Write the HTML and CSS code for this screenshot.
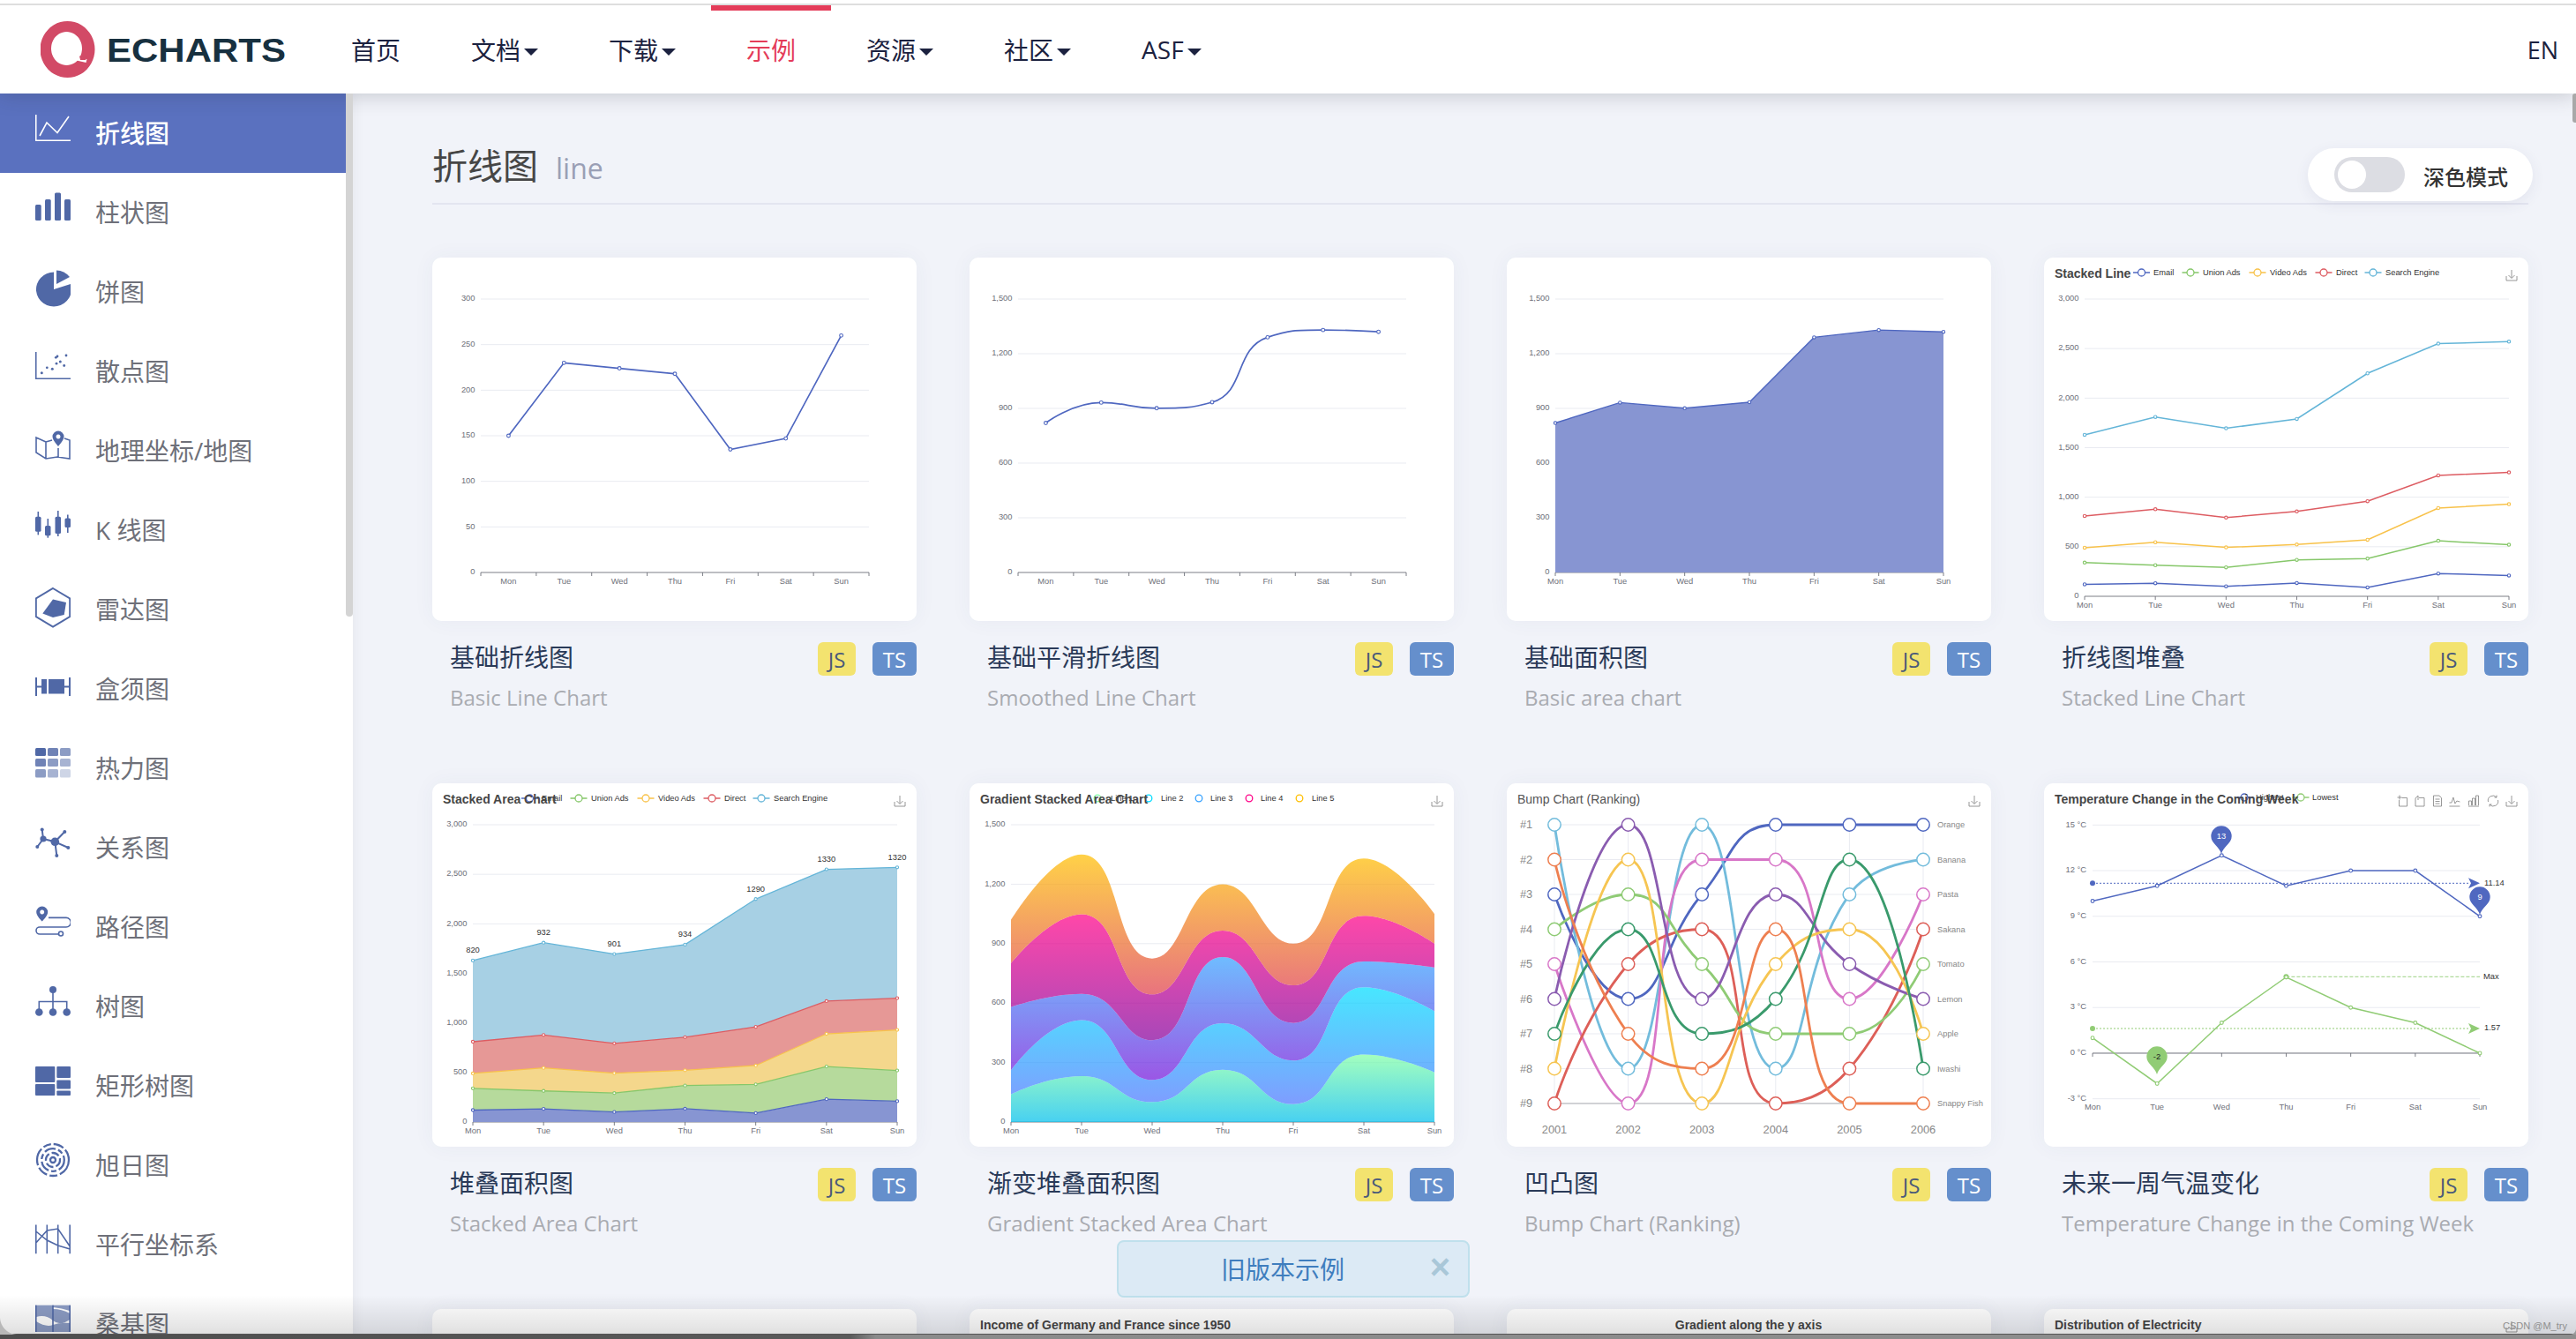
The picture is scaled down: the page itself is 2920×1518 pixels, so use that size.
FILE: index.html
```html
<!DOCTYPE html>
<html lang="zh-CN">
<head>
<meta charset="utf-8">
<title>Examples - Apache ECharts</title>
<link rel="stylesheet" href="styles.css">
</head>
<body>
<div class="app">
  <header class="topbar">
    <svg class="logo" viewBox="0 0 278 100" aria-label="ECharts">
      <path class="logo-ring" fill-rule="evenodd" d="M30.5 18a31 32 0 1 0 0.01 0ZM29.5 30a17.5 19 0 1 1-0.01 0Z"/>
      <path class="logo-gap" d="M39 60l13 3"/>
      <path class="logo-hook" d="M44 57q2 3 6 2l3-1-2 4-6 0Z"/>
      <text class="logo-text" x="75" y="64" textLength="203" lengthAdjust="spacingAndGlyphs">ECHARTS</text>
    </svg>
    <nav class="nav">
      <a class="nav-item">首页</a>
      <a class="nav-item has-caret">文档</a>
      <a class="nav-item has-caret">下载</a>
      <a class="nav-item is-active">示例</a>
      <a class="nav-item has-caret">资源</a>
      <a class="nav-item has-caret">社区</a>
      <a class="nav-item has-caret">ASF</a>
    </nav>
    <a class="lang">EN</a>
  </header>

  <div class="body">
    <aside class="sidebar">
      <a class="side-item is-active">
        <svg class="side-icon" viewBox="0 0 40 90"><path class="ic-line" d="M.75 24V53.25H40M5 48L13 33L25 44.5L38 26"/></svg>
        <span>折线图</span>
      </a>
      <a class="side-item">
        <svg class="side-icon" viewBox="0 0 40 90"><rect x="0" y="36" width="6.7" height="18" rx="1.5"/><rect x="11" y="30" width="6.7" height="24" rx="1.5"/><rect x="22" y="22.5" width="7" height="31.5" rx="1.5"/><rect x="33" y="30" width="7" height="24" rx="1.5"/></svg>
        <span>柱状图</span>
      </a>
      <a class="side-item">
        <svg class="side-icon" viewBox="0 0 40 90"><path d="M21 22.5A20 19.5 0 1 0 40 36L21 42Z"/><path d="M24 20.6Q33 21 39 28L24 36Z"/></svg>
        <span>饼图</span>
      </a>
      <a class="side-item">
        <svg class="side-icon" viewBox="0 0 40 90"><path class="ic-line" d="M.75 23V53.25H40"/><circle cx="7.3" cy="46.8" r="1.5"/><circle cx="13.3" cy="40.8" r="1.4"/><circle cx="19.3" cy="42.2" r="1.5"/><circle cx="24" cy="36.2" r="1.4"/><circle cx="23.3" cy="29.3" r="1.4"/><circle cx="28.3" cy="34" r="1.5"/><circle cx="32.7" cy="38.5" r="1.4"/><circle cx="35" cy="27" r="1.4"/><circle cx="25" cy="28" r="1.4"/></svg>
        <span>散点图</span>
      </a>
      <a class="side-item">
        <svg class="side-icon" viewBox="0 0 40 90"><path class="ic-line" d="M12 35L1 30V47L12 54L25 52L39 54V33L33 31M12 35L19 33M12 35V54M26 42V52"/><path fill-rule="evenodd" d="M26 22.5a6.5 6.5 0 0 1 6.5 6.5c0 4-6.5 11-6.5 11s-6.500-7-6.500-11a6.500 6.500 0 0 1 6.500-6.500ZM26 26.500a2.500 2.500 0 1 0 .01 0Z"/></svg>
        <span>地理坐标/地图</span>
      </a>
      <a class="side-item">
        <svg class="side-icon" viewBox="0 0 40 90"><rect x="0" y="29.800" width="6.500" height="17" rx="1.500"/><rect x="2.500" y="24" width="1.600" height="26.400"/><rect x="11" y="40" width="6.500" height="11.300" rx="1.500"/><rect x="13.500" y="32" width="1.600" height="21.700"/><rect x="22.500" y="29.800" width="6.500" height="19.200" rx="1.500"/><rect x="25" y="23" width="1.600" height="29"/><rect x="33.500" y="31.600" width="6.500" height="10.400" rx="1.500"/><rect x="36" y="27.500" width="1.600" height="20.500"/></svg>
        <span>K 线图</span>
      </a>
      <a class="side-item">
        <svg class="side-icon" viewBox="0 0 40 90"><path class="ic-line ic-thick" d="M20 21L39.200 32.500V53L20 64.700L.8 53V32.500Z"/><path d="M20 33.400L35 37L32.700 51L20 54L8.300 49.500Z"/></svg>
        <span>雷达图</span>
      </a>
      <a class="side-item">
        <svg class="side-icon" viewBox="0 0 40 90"><path class="ic-line ic-thick" d="M1 32V53M1 42.500H8M39 32V53M33 42.500H39"/><rect x="7" y="34" width="6" height="16.500"/><rect x="15" y="34" width="18" height="16.500"/></svg>
        <span>盒须图</span>
      </a>
      <a class="side-item">
        <svg class="side-icon" viewBox="0 0 40 90">
          <rect x="0" y="22" width="12" height="9" rx="1.500"/><rect class="o8" x="14" y="22" width="12" height="9" rx="1.500"/><rect class="o6" x="28" y="22" width="12" height="9" rx="1.500"/>
          <rect class="o8" x="0" y="34" width="12" height="9" rx="1.500"/><rect class="o6" x="14" y="34" width="12" height="9" rx="1.500"/><rect class="o5" x="28" y="34" width="12" height="9" rx="1.500"/>
          <rect class="o6" x="0" y="46" width="12" height="9.500" rx="1.500"/><rect class="o5" x="14" y="46" width="12" height="9.500" rx="1.500"/><rect class="o3" x="28" y="46" width="12" height="9.500" rx="1.500"/>
        </svg>
        <span>热力图</span>
      </a>
      <a class="side-item">
        <svg class="side-icon" viewBox="0 0 40 90"><path class="ic-line ic-thick" d="M7.700 24.600L9 35L2.300 44M9 35L22.300 38.300L33.300 27M22.300 38.300L37.300 45M22.300 38.300L24.300 54"/><circle cx="22.300" cy="38.300" r="4.800"/><circle cx="9" cy="35" r="3.600"/><circle cx="7.700" cy="24.600" r="2"/><circle cx="2.300" cy="44" r="2"/><circle cx="33.300" cy="27" r="2"/><circle cx="37.300" cy="45" r="2"/><circle cx="24.300" cy="54" r="2"/></svg>
        <span>关系图</span>
      </a>
      <a class="side-item">
        <svg class="side-icon" viewBox="0 0 40 90"><path fill-rule="evenodd" d="M7.700 21.500a6.500 6.500 0 0 1 6.500 6.500c0 4.500-6.500 10.500-6.500 10.500s-6.500-6-6.500-10.500a6.500 6.500 0 0 1 6.500-6.500ZM7.700 25.500a2.500 2.500 0 1 0 .01 0Z"/><path class="ic-line" d="M15 34.400H35A5.300 5.300 0 0 1 35 45H5A4 4 0 0 0 5 53H26.500"/><circle class="ic-line" cx="29" cy="52.500" r="2.500"/></svg>
        <span>路径图</span>
      </a>
      <a class="side-item">
        <svg class="side-icon" viewBox="0 0 40 90"><path class="ic-line" d="M20 26V50M4.300 50V39.500H35.700V50"/><circle cx="20" cy="26" r="4"/><circle cx="4.300" cy="51.500" r="4.300"/><circle cx="20" cy="51.500" r="4.300"/><circle cx="35.700" cy="51.500" r="4.300"/></svg>
        <span>树图</span>
      </a>
      <a class="side-item">
        <svg class="side-icon" viewBox="0 0 40 90"><rect x="0" y="23" width="22.300" height="18" rx="1"/><rect x="0" y="43" width="22.300" height="13" rx="1"/><rect x="24.300" y="23" width="15.700" height="13" rx="1"/><rect x="24.300" y="38.500" width="15.700" height="10" rx="1"/><rect x="24.300" y="50.500" width="15.700" height="5.500" rx="1"/></svg>
        <span>矩形树图</span>
      </a>
      <a class="side-item">
        <svg class="side-icon" viewBox="0 0 40 90"><g class="ic-rings"><circle cx="20" cy="39" r="3"/><circle cx="20" cy="39" r="8" stroke-dasharray="9 3"/><circle cx="20" cy="39" r="12.800" stroke-dasharray="13 3 6 3"/><circle cx="20" cy="39" r="18" stroke-dasharray="20 3 9 3 12 3"/></g></svg>
        <span>旭日图</span>
      </a>
      <a class="side-item">
        <svg class="side-icon" viewBox="0 0 40 90"><path class="ic-line" d="M.8 22.400V55.300M13.300 22.400V55.300M25.700 22.400V55.300M39.200 22.400V55.300M.8 43L13.300 29L25.700 27L39.200 47M.8 30L13.300 40L25.700 46L39.200 50"/></svg>
        <span>平行坐标系</span>
      </a>
      <a class="side-item">
        <svg class="side-icon" viewBox="0 0 40 90"><rect class="o6" x="0" y="23.700" width="40" height="30.300"/><path class="ic-sankey" d="M1 37Q12 34 20 41T39 40V44Q28 43 20 46T1 42ZM20 28Q30 28 39 33V30Q30 27 20 26Z"/><path class="ic-line" d="M.8 23.700V54M20 23.700V54M39.200 23.700V54"/></svg>
        <span>桑基图</span>
      </a>
    </aside>

    <main class="main">
      <h1 class="page-title">折线图<small class="page-sub">line</small></h1>
      <section class="grid">
        <article class="item">
          <div class="card" data-chart="basic"></div>
          <div class="caption"><h2 class="cap-title">基础折线图</h2><div class="badges"><span class="badge badge-js">JS</span><span class="badge badge-ts">TS</span></div><p class="cap-sub">Basic Line Chart</p></div>
        </article>
        <article class="item">
          <div class="card" data-chart="smooth"></div>
          <div class="caption"><h2 class="cap-title">基础平滑折线图</h2><div class="badges"><span class="badge badge-js">JS</span><span class="badge badge-ts">TS</span></div><p class="cap-sub">Smoothed Line Chart</p></div>
        </article>
        <article class="item">
          <div class="card" data-chart="area"></div>
          <div class="caption"><h2 class="cap-title">基础面积图</h2><div class="badges"><span class="badge badge-js">JS</span><span class="badge badge-ts">TS</span></div><p class="cap-sub">Basic area chart</p></div>
        </article>
        <article class="item">
          <div class="card" data-chart="stacked-line"></div>
          <div class="caption"><h2 class="cap-title">折线图堆叠</h2><div class="badges"><span class="badge badge-js">JS</span><span class="badge badge-ts">TS</span></div><p class="cap-sub">Stacked Line Chart</p></div>
        </article>
        <article class="item">
          <div class="card" data-chart="stacked-area"></div>
          <div class="caption"><h2 class="cap-title">堆叠面积图</h2><div class="badges"><span class="badge badge-js">JS</span><span class="badge badge-ts">TS</span></div><p class="cap-sub">Stacked Area Chart</p></div>
        </article>
        <article class="item">
          <div class="card" data-chart="gradient"></div>
          <div class="caption"><h2 class="cap-title">渐变堆叠面积图</h2><div class="badges"><span class="badge badge-js">JS</span><span class="badge badge-ts">TS</span></div><p class="cap-sub">Gradient Stacked Area Chart</p></div>
        </article>
        <article class="item">
          <div class="card" data-chart="bump"></div>
          <div class="caption"><h2 class="cap-title">凹凸图</h2><div class="badges"><span class="badge badge-js">JS</span><span class="badge badge-ts">TS</span></div><p class="cap-sub">Bump Chart (Ranking)</p></div>
        </article>
        <article class="item">
          <div class="card" data-chart="temperature"></div>
          <div class="caption"><h2 class="cap-title">未来一周气温变化</h2><div class="badges"><span class="badge badge-js">JS</span><span class="badge badge-ts">TS</span></div><p class="cap-sub">Temperature Change in the Coming Week</p></div>
        </article>
        <article class="item"><div class="card" data-chart="blank"></div></article>
        <article class="item"><div class="card" data-chart="income"></div></article>
        <article class="item"><div class="card" data-chart="gradient-y"></div></article>
        <article class="item"><div class="card" data-chart="electricity"></div></article>
      </section>
    </main>
  </div>

  <div class="scroll-thumb side-thumb"></div>
  <div class="scroll-thumb page-thumb"></div>

  <div class="dark-toggle">
    <span class="switch"><span class="knob"></span></span>
    <span class="dark-label">深色模式</span>
  </div>

  <div class="notice"><span class="notice-text">旧版本示例</span><span class="notice-close">×</span></div>

  <div class="vignette"></div>
  <div class="watermark">CSDN @M_try</div>
  <div class="edge"><span class="corner corner-l"></span><span class="corner corner-r"></span></div>
</div>
<script src="charts.js"></script>
</body>
</html>
```

FILE: styles.css
```css
* { box-sizing: border-box; }
html, body { margin: 0; padding: 0; }
body {
  font-family: "Open Sans", "Noto Sans CJK SC", sans-serif;
  background: #f1f3f9;
  overflow: hidden;
}
.app {
  position: relative;
  width: 2920px;
  height: 1518px;
  overflow: hidden;
  display: flex;
  flex-direction: column;
  border-top: 4px solid #fff;
}
.topbar {
  position: relative;
  z-index: 3;
  flex: none;
  height: 102px;
  display: flex;
  align-items: stretch;
  padding-left: 46px;
  background: #fff;
  border-top: 2px solid #dedede;
  box-shadow: 0 2px 22px rgba(40, 45, 60, .22);
}
.logo { width: 278px; height: 100px; flex: none; }
.logo-ring { fill: #d24a66; }
.logo-gap { stroke: #fff; stroke-width: 4; fill: none; }
.logo-hook { fill: #d24a66; }
.logo-text { font: 700 37px "Liberation Sans", sans-serif; fill: #17303f; }
.nav { display: flex; margin-left: 34px; }
.nav-item {
  display: flex;
  align-items: center;
  padding: 0 40px 6px;
  border-top: 6px solid transparent;
  font-size: 28px;
  color: #1c2240;
}
.nav-item.is-active { color: #e43c59; border-top-color: #e43c59; }
.has-caret::after {
  content: "";
  width: 0;
  height: 0;
  margin: 5px 0 0 4px;
  border-style: solid;
  border-width: 8px 8px 0;
  border-color: #1c2240 transparent transparent;
}
.lang {
  margin-left: auto;
  padding-right: 20px;
  align-self: center;
  font-size: 27px;
  color: #1c2240;
}
.body { flex: 1; min-height: 0; display: flex; }
.sidebar {
  position: relative;
  z-index: 2;
  flex: none;
  width: 400px;
  padding-right: 8px;
  background: #fff;
  box-shadow: 0 0 14px rgba(40, 45, 60, .07);
  overflow: hidden;
}
.side-item {
  display: flex;
  align-items: center;
  gap: 28px;
  height: 90px;
  padding-left: 40px;
  font-size: 28px;
  color: #6e7079;
}
.side-item span { margin-top: -2px; }
.side-item.is-active { background: #5a71bf; color: #fff; font-weight: 500; }
.side-icon { flex: none; width: 40px; height: 90px; fill: #5068a6; }
.side-item.is-active .ic-line { stroke: #fff; }
.ic-line { fill: none; stroke: #5068a6; stroke-width: 1.6; }
.ic-thick { stroke-width: 2; }
.ic-sankey { fill: #fff; }
.ic-rings circle { fill: none; stroke: #5068a6; stroke-width: 2.300; }
.o8 { opacity: .82; }
.o6 { opacity: .66; }
.o5 { opacity: .5; }
.o3 { opacity: .28; }
.main { flex: 1; min-width: 0; padding: 0 54px 0 90px; background: #f1f3f9; }
.page-title {
  margin: 0;
  height: 126px;
  padding-top: 56px;
  border-bottom: 2px solid #e3e5f0;
  font-size: 40px;
  line-height: 52px;
  font-weight: 400;
  color: #464646;
}
.page-sub { margin-left: 20px; font-size: 32px; color: #9a9fb5; }
.grid {
  display: grid;
  grid-template-columns: repeat(4, 549px);
  grid-auto-rows: 596px;
  column-gap: 60px;
  margin-top: 60px;
}
.card {
  height: 412px;
  border-radius: 10px;
  background: #fff;
  box-shadow: 0 0 24px rgba(60, 70, 110, .05);
  overflow: hidden;
}
.chart { display: block; width: 549px; height: 412px; }
.chart text { font-family: "Liberation Sans", sans-serif; }
.caption {
  display: grid;
  grid-template-columns: 1fr auto;
  row-gap: 7px;
  padding: 21px 0 0 20px;
}
.cap-title { margin: 0; font-size: 28px; line-height: 40px; font-weight: 400; color: #2a3a58; }
.cap-sub { grid-column: 1 / -1; margin: 0; font-size: 24px; line-height: 36px; color: #a9abb1; }
.badges { display: flex; gap: 19px; margin-top: 3px; }
.badge {
  display: flex;
  align-items: center;
  justify-content: center;
  height: 38px;
  border-radius: 6px;
  font-size: 24px;
}
.badge-js { width: 43px; background: #f3e36f; color: #4a5a7a; }
.badge-ts { width: 50px; background: #658fcc; color: #fff; }
.scroll-thumb { position: absolute; z-index: 4; background: #d4d4d4; }
.side-thumb { left: 392px; top: 102px; width: 8px; height: 593px; border-radius: 0 0 4px 4px; }
.page-thumb { right: 0; top: 102px; width: 4px; height: 33px; background: #a8a8a8; border-radius: 3px 0 0 3px; }
.dark-toggle {
  position: absolute;
  z-index: 2;
  left: 2616px;
  top: 164px;
  width: 255px;
  height: 60px;
  display: flex;
  align-items: center;
  gap: 21px;
  padding-left: 30px;
  border-radius: 30px;
  background: #fff;
  box-shadow: 0 4px 16px rgba(60, 70, 110, .08);
}
.switch { flex: none; display: flex; align-items: center; width: 80px; height: 40px; padding-left: 4px; border-radius: 20px; background: #dcdde3; }
.knob { width: 32px; height: 32px; border-radius: 50%; background: #fff; }
.dark-label { font-size: 24px; font-weight: 500; color: #333; margin-top: 3px; }
.notice {
  position: absolute;
  z-index: 3;
  left: 1266px;
  top: 1402px;
  width: 400px;
  height: 65px;
  display: flex;
  align-items: center;
  justify-content: space-between;
  padding: 0 20px 0 116px;
  border: 2px solid #bfe0ec;
  border-radius: 8px;
  background: #dceaf5;
  color: #3f7ebe;
}
.notice-text { font-size: 28px; line-height: 36px; margin-top: 1px; }
.notice-close { font: 700 40px/40px "Liberation Sans", sans-serif; color: #a9c7d8; margin-top: -6px; }
.vignette {
  position: absolute;
  z-index: 5;
  left: 0;
  right: 0;
  bottom: 6px;
  height: 44px;
  background: linear-gradient(rgba(0, 0, 0, 0), rgba(0, 0, 0, .12));
  pointer-events: none;
}
.watermark {
  position: absolute;
  z-index: 6;
  left: 2837px;
  top: 1490px;
  white-space: nowrap;
  font: 11px/18px "Liberation Sans", sans-serif;
  color: #8f8f8f;
}
.edge {
  position: absolute;
  z-index: 6;
  left: 0;
  right: 0;
  bottom: 0;
  height: 6px;
  background: linear-gradient(90deg, #4d4d4d, #5a5a5a 33%, #8b8b8b 34%, #8e8e8e 100%);
  border-top: 1px solid #555;
}
.corner { position: absolute; bottom: 5px; }
.corner-l { left: 0; width: 20px; height: 20px; background: radial-gradient(circle at 100% 0, transparent 19.500px, #b8b8b8 20.500px); }
.corner-r { right: 0; width: 7px; height: 7px; background: radial-gradient(circle at 0 0, transparent 6.500px, #9a9a9a 7.500px); }
```

FILE: charts.js
```js
(function () {
  var CATS = ['Mon', 'Tue', 'Wed', 'Thu', 'Fri', 'Sat', 'Sun'];
  var BLUE = '#4f67c0', GREEN = '#86c76a', YELLOW = '#f8c24a', RED = '#dd5c62', CYAN = '#64b5d8';
  var GRID = '#e9ebf1', AXIS = '#6e7079', LABEL = '#6e7079';

  function fmt(n) { return String(n).replace(/\B(?=(\d{3})+$)/g, ','); }
  function r2(n) { return Math.round(n * 100) / 100; }
  function text(x, y, s, o) {
    o = o || {};
    return '<text x="' + r2(x) + '" y="' + r2(y) + '" dy=".35em" font-size="' + (o.size || 9.33) + '" fill="' + (o.fill || LABEL) + '"' +
      (o.anchor ? ' text-anchor="' + o.anchor + '"' : '') + (o.weight ? ' font-weight="' + o.weight + '"' : '') + '>' + s + '</text>';
  }
  function hline(x1, x2, y, c, w) { return '<path d="M' + r2(x1) + ' ' + r2(y) + 'H' + r2(x2) + '" stroke="' + c + '" stroke-width="' + (w || 1) + '" fill="none"/>'; }
  function vline(x, y1, y2, c, w) { return '<path d="M' + r2(x) + ' ' + r2(y1) + 'V' + r2(y2) + '" stroke="' + c + '" stroke-width="' + (w || 1) + '" fill="none"/>'; }
  function poly(p) { return 'M' + p.map(function (q) { return r2(q[0]) + ' ' + r2(q[1]); }).join('L'); }

  function clamp(v, a, b) { return Math.max(Math.min(a, b), Math.min(v, Math.max(a, b))); }
  /* Same control-point rule as an ECharts smooth line */
  function smooth(p) {
    var s = 0.5, d = 'M' + r2(p[0][0]) + ' ' + r2(p[0][1]), c0 = p[0];
    for (var i = 1; i < p.length; i++) {
      var c = p[i], prev = p[i - 1], next = p[i + 1], before = c, after = c;
      if (next) {
        var vx = next[0] - prev[0], vy = next[1] - prev[1];
        var l0 = Math.hypot(c[0] - prev[0], c[1] - prev[1]), l1 = Math.hypot(next[0] - c[0], next[1] - c[1]);
        var ratio = l1 / (l0 + l1);
        var nx = clamp(c[0] + vx * s * ratio, c[0], next[0]), ny = clamp(c[1] + vy * s * ratio, c[1], next[1]);
        vx = nx - c[0]; vy = ny - c[1];
        var bx = clamp(c[0] - vx * l0 / l1, prev[0], c[0]), by = clamp(c[1] - vy * l0 / l1, prev[1], c[1]);
        vx = c[0] - bx; vy = c[1] - by;
        before = [bx, by];
        after = [c[0] + vx * l1 / l0, c[1] + vy * l1 / l0];
      }
      d += 'C' + r2(c0[0]) + ' ' + r2(c0[1]) + ' ' + r2(before[0]) + ' ' + r2(before[1]) + ' ' + r2(c[0]) + ' ' + r2(c[1]);
      c0 = after;
    }
    return d;
  }
  function dots(p, color, r) {
    return p.map(function (q) {
      return '<circle cx="' + r2(q[0]) + '" cy="' + r2(q[1]) + '" r="' + (r || 1.9) + '" fill="#fff" stroke="' + color + '" stroke-width="1.1"/>';
    }).join('');
  }
  function download(x, y) {
    return '<path transform="translate(' + x + ' ' + y + ')" d="M0 -6V3M-3.500 0L0 3.500L3.500 0M-6 1V6H6V1" fill="none" stroke="#8a8a8a" stroke-width=".9"/>';
  }
  function title(s, weight, x, anchor) {
    return text(x === undefined ? 12 : x, 18.500, s, { size: 14, fill: weight ? '#464646' : '#555', weight: weight ? 700 : null, anchor: anchor });
  }
  function axes(o) {
    var L = o.L, R = o.R, T = o.T, B = o.B, out = '', n = o.cats.length;
    var steps = o.yMax / o.yStep;
    for (var i = 0; i <= steps; i++) {
      var y = B - (B - T) * i / steps;
      if (i) out += hline(L, R, y, GRID);
      out += text(L - 6.500, y - 1, fmt(o.yStep * i), { anchor: 'end' });
    }
    out += hline(L, R, B, AXIS, .9);
    var xs = [], j;
    if (o.boundary) {
      var band = (R - L) / n;
      for (j = 0; j <= n; j++) out += vline(L + band * j, B, B + 4, AXIS, .9);
      for (j = 0; j < n; j++) xs.push(L + band * (j + .5));
    } else {
      for (j = 0; j < n; j++) { xs.push(L + (R - L) * j / (n - 1)); out += vline(xs[j], B, B + 4, AXIS, .9); }
    }
    xs.forEach(function (x, k) { out += text(x, B + 10, o.cats[k], { anchor: 'middle' }); });
    return { svg: out, xs: xs, y: function (v) { return B - (B - T) * v / o.yMax; } };
  }
  function pts(a, vals) { return vals.map(function (v, i) { return [a.xs[i], a.y(v)]; }); }
  function legend(items, y, lineSym) {
    return items.map(function (it) {
      var s = '';
      if (lineSym) s += hline(it[0] - 9.500, it[0] + 9.500, y, it[2], 1.300);
      s += '<circle cx="' + it[0] + '" cy="' + y + '" r="' + (lineSym ? 4 : 3.800) + '" fill="#fff" stroke="' + it[2] + '" stroke-width="1.300"/>';
      return s + text(it[1], y - .5, it[3], { fill: '#333' });
    }).join('');
  }
  var LEGEND5 = [
    [110.500, 124, BLUE, 'Email'], [166, 180, GREEN, 'Union Ads'], [242, 256, YELLOW, 'Video Ads'],
    [317, 331, RED, 'Direct'], [373, 387, CYAN, 'Search Engine']
  ];
  var STACK = [
    [120, 132, 101, 134, 90, 230, 210],
    [340, 314, 292, 368, 380, 560, 520],
    [490, 546, 493, 522, 570, 890, 930],
    [810, 878, 794, 856, 960, 1220, 1250],
    [1630, 1810, 1695, 1790, 2250, 2550, 2570]
  ];
  var STACK_C = [BLUE, GREEN, YELLOW, RED, CYAN];
  var STACK_F = ['#8795d2', '#b6da9c', '#f4d78c', '#e69896', '#a7d0e4'];

  var charts = {
    basic: function () {
      var a = axes({ L: 55, R: 495, T: 47, B: 357, yMax: 300, yStep: 50, cats: CATS, boundary: true });
      var p = pts(a, [150, 230, 224, 218, 135, 147, 260]);
      return a.svg + '<path d="' + poly(p) + '" fill="none" stroke="' + BLUE + '" stroke-width="1.700"/>' + dots(p, BLUE);
    },
    smooth: function () {
      var a = axes({ L: 55, R: 495, T: 47, B: 357, yMax: 1500, yStep: 300, cats: CATS, boundary: true });
      var p = pts(a, [820, 932, 901, 934, 1290, 1330, 1320]);
      return a.svg + '<path d="' + smooth(p) + '" fill="none" stroke="' + BLUE + '" stroke-width="1.700"/>' + dots(p, BLUE);
    },
    area: function () {
      var a = axes({ L: 55, R: 495, T: 47, B: 357, yMax: 1500, yStep: 300, cats: CATS });
      var p = pts(a, [820, 932, 901, 934, 1290, 1330, 1320]);
      return a.svg + '<path d="' + poly(p) + 'L495 357L55 357Z" fill="#8795d2"/><path d="' + poly(p) + '" fill="none" stroke="' + BLUE + '" stroke-width="1.400"/>' + dots(p, BLUE, 1.700);
    },
    'stacked-line': function () {
      var a = axes({ L: 46, R: 527, T: 47, B: 384, yMax: 3000, yStep: 500, cats: CATS });
      var s = a.svg;
      STACK.forEach(function (v, i) {
        var p = pts(a, v);
        s += '<path d="' + poly(p) + '" fill="none" stroke="' + STACK_C[i] + '" stroke-width="1.500"/>' + dots(p, STACK_C[i], 1.700);
      });
      return s + title('Stacked Line', true) + legend(LEGEND5, 17, true) + download(530, 20);
    },
    'stacked-area': function () {
      var a = axes({ L: 46, R: 527, T: 47, B: 384, yMax: 3000, yStep: 500, cats: CATS });
      var s = a.svg, labels = [820, 932, 901, 934, 1290, 1330, 1320], lines = '';
      STACK.forEach(function (v, i) {
        var p = pts(a, v), low = i ? pts(a, STACK[i - 1]).reverse() : [[527, 384], [46, 384]];
        s += '<path d="' + poly(p.concat(low)) + 'Z" fill="' + STACK_F[i] + '"/>';
        lines += '<path d="' + poly(p) + '" fill="none" stroke="' + STACK_C[i] + '" stroke-width="1.300"/>' + dots(p, STACK_C[i], 1.600);
        if (i === 4) p.forEach(function (q, k) { lines += text(q[0], q[1] - 12, labels[k], { anchor: 'middle', fill: '#333' }); });
      });
      return s + lines + legend(LEGEND5, 17, true) + title('Stacked Area Chart', true) + download(530, 20);
    },
    gradient: function () {
      var a = axes({ L: 47, R: 527, T: 47, B: 384, yMax: 1500, yStep: 300, cats: CATS });
      var raw = [
        [140, 232, 101, 264, 90, 340, 250],
        [120, 282, 111, 234, 220, 340, 310],
        [320, 132, 201, 334, 190, 130, 220],
        [220, 402, 231, 134, 190, 230, 120],
        [220, 302, 181, 234, 210, 290, 150]
      ];
      var grads = [
        ['rgb(128,255,165)', 'rgb(1,191,236)'], ['rgb(0,221,255)', 'rgb(77,119,255)'], ['rgb(55,162,255)', 'rgb(116,21,219)'],
        ['rgb(255,0,135)', 'rgb(135,0,157)'], ['rgb(255,191,0)', 'rgb(224,62,76)']
      ];
      var defs = '<defs>' + grads.map(function (g, i) {
        return '<linearGradient id="area-g' + i + '" x1="0" y1="0" x2="0" y2="1"><stop offset="0" stop-color="' + g[0] + '"/><stop offset="1" stop-color="' + g[1] + '"/></linearGradient>';
      }).join('') + '</defs>';
      var sum = [0, 0, 0, 0, 0, 0, 0], prevPts = null, s = a.svg;
      raw.forEach(function (v, i) {
        sum = sum.map(function (t, k) { return t + v[k]; });
        var p = pts(a, sum);
        var low = prevPts ? 'L' + smooth(prevPts.slice().reverse()).slice(1) : 'L527 384L47 384';
        s += '<path d="' + smooth(p) + low + 'Z" fill="url(#area-g' + i + ')" fill-opacity=".72"/>';
        prevPts = p;
      });
      var lg = [[145, 160, '#80ffa5', 'Line 1'], [203, 217, '#00ddff', 'Line 2'], [260, 273, '#37a2ff', 'Line 3'], [317, 330, '#ff0087', 'Line 4'], [374, 388, '#ffbf00', 'Line 5']];
      return defs + s + legend(lg, 17, false) + title('Gradient Stacked Area Chart', true) + download(530, 20);
    },
    bump: function () {
      var xs = [54, 137.600, 221.200, 304.800, 388.400, 472];
      var yOf = function (r) { return 47 + (r - 1) * 39.500; };
      var S = [
        ['Orange', '#4f67c0', [3, 6, 3, 1, 1, 1]], ['Banana', '#73bcdc', [1, 8, 1, 8, 3, 2]], ['Pasta', '#d877c8', [5, 9, 2, 2, 6, 3]],
        ['Sakana', '#dd5f58', [9, 5, 4, 9, 8, 4]], ['Tomato', '#8fcb75', [4, 3, 5, 7, 7, 5]], ['Lemon', '#8a5cb0', [6, 1, 6, 3, 5, 6]],
        ['Apple', '#f6c552', [8, 2, 9, 5, 4, 7]], ['Iwashi', '#3a9a6c', [7, 4, 7, 6, 2, 8]], ['Snappy Fish', '#ee7f50', [2, 7, 8, 4, 9, 9]]
      ];
      var s = '', i;
      for (i = 1; i <= 8; i++) s += hline(54, 472, yOf(i), GRID);
      xs.forEach(function (x, k) { s += vline(x, 47, 363, GRID); s += text(x, 393, 2001 + k, { anchor: 'middle', size: 12.800, fill: '#888' }); });
      s += hline(54, 472, 363, '#a4a6ac', 1.100);
      for (i = 1; i <= 9; i++) s += text(15, yOf(i), '#' + i, { size: 12.800, fill: '#888' });
      S.forEach(function (it) {
        var p = it[2].map(function (r, k) { return [xs[k], yOf(r)]; });
        s += '<path d="' + smooth(p) + '" fill="none" stroke="' + it[1] + '" stroke-width="2.800"/>';
      });
      S.forEach(function (it) {
        it[2].forEach(function (r, k) {
          s += '<circle cx="' + xs[k] + '" cy="' + yOf(r) + '" r="7.200" fill="#fff" stroke="' + it[1] + '" stroke-width="1.500"/>';
        });
        s += text(488, yOf(it[2][5]), it[0], { fill: '#888' });
      });
      return title('Bump Chart (Ranking)', false) + s + download(530, 20);
    },
    temperature: function () {
      var L = 55, R = 494, T = 47.300, B = 357.700, s = '';
      var xs = CATS.map(function (c, k) { return L + (R - L) * k / 6; });
      var y = function (v) { return B - (B - T) * (v + 3) / 18; };
      [15, 12, 9, 6, 3, 0, -3].forEach(function (v) {
        if (v !== 0) s += hline(L, R, y(v), GRID);
        s += text(48, y(v) - 1, v + ' °C', { anchor: 'end' });
      });
      s += hline(L, R, y(0), AXIS, 1);
      xs.forEach(function (x, k) { s += vline(x, y(0), y(0) + 4, AXIS, .9); s += text(x, 367, CATS[k], { anchor: 'middle' }); });
      var hi = [10, 11, 13, 11, 12, 12, 9], lo = [1, -2, 2, 5, 3, 2, 0];
      var TBLUE = '#5068c0', TGREEN = '#91cc75';
      var marker = function (yy, c, lab) {
        return '<path d="M' + L + ' ' + yy + 'H481" stroke="' + c + '" stroke-width="1" stroke-dasharray="2 2" fill="none"/>' +
          '<circle cx="' + L + '" cy="' + yy + '" r="3" fill="' + c + '"/>' +
          '<path d="M' + R + ' ' + yy + 'L481 ' + (yy - 6) + 'L484 ' + yy + 'L481 ' + (yy + 6) + 'Z" fill="' + c + '"/>' +
          text(499, yy - 1, lab, { fill: '#333' });
      };
      s += marker(113.300, TBLUE, '11.14') + marker(278, TGREEN, '1.57');
      s += '<path d="M274.400 219.300H494" stroke="' + TGREEN + '" stroke-width=".9" stroke-dasharray="4 2" fill="none"/><circle cx="274.400" cy="219.300" r="3" fill="' + TGREEN + '"/>' + text(498, 218.500, 'Max', { fill: '#333' });
      var hp = hi.map(function (v, k) { return [xs[k], y(v)]; }), lp = lo.map(function (v, k) { return [xs[k], y(v)]; });
      s += '<path d="' + poly(hp) + '" fill="none" stroke="' + TBLUE + '" stroke-width="1.500"/>' + dots(hp, TBLUE);
      s += '<path d="' + poly(lp) + '" fill="none" stroke="' + TGREEN + '" stroke-width="1.500"/>' + dots(lp, TGREEN);
      var pin = function (x, cy, tip, c, lab, fill) {
        var r = 11.700;
        return '<path d="M' + x + ' ' + tip + 'C' + (x - 2) + ' ' + (tip - 8) + ' ' + (x - r) + ' ' + (cy + r * .7) + ' ' + (x - r) + ' ' + cy +
          'A' + r + ' ' + r + ' 0 1 1 ' + (x + r) + ' ' + cy + 'C' + (x + r) + ' ' + (cy + r * .7) + ' ' + (x + 2) + ' ' + (tip - 8) + ' ' + x + ' ' + tip + 'Z" fill="' + c + '"/>' +
          text(x, cy - .5, lab, { anchor: 'middle', fill: fill });
      };
      s += pin(201, 60, 80, TBLUE, '13', '#fff') + pin(494, 129, 149, TBLUE, '9', '#fff') + pin(128, 310, 330, TGREEN, '-2', '#222');
      s += legend([[227, 240, TBLUE, 'Highest'], [291, 304, TGREEN, 'Lowest']], 16, true);
      s += title('Temperature Change in the Coming Week', true);
      var ic = [
        [406.500, 'M-6 -4H-1M-3.500 -6.500V-1.500M-1 -3.500H5V6H-4V-1'],
        [426, 'M-1 -3.500H5V6H-5V-3L-2 -6V-1'],
        [446, 'M-4.500 -6H2L4.500 -3.500V6H-4.500ZM-2.500 -2H2.500M-2.500 .5H2.500M-2.500 3H2.500'],
        [465.400, 'M-6 6H6M-6 2H-3.500L-1.500 -4L.5 3L2.500 0L6 1'],
        [487, 'M-6 6H6M-5.500 5V0H-2.500V5M-1.500 5V-3H1.500V5M2.500 5V-6H5.500V5'],
        [509, 'M-5.500 1A5.500 5.500 0 0 1 4 -4M5.500 -1A5.500 5.500 0 0 1 -4 4M4 -6.500V-4H1.500M-4 6.500V4H-1.500'],
        [530, 'M0 -6V3M-3.500 0L0 3.500L3.500 0M-6 1V6H6V1']
      ];
      ic.forEach(function (k) { s += '<path transform="translate(' + k[0] + ' 20)" d="' + k[1] + '" fill="none" stroke="#7f7f7f" stroke-width=".8"/>'; });
      return s;
    },
    blank: function () { return ''; },
    income: function () { return title('Income of Germany and France since 1950', true); },
    'gradient-y': function () { return title('Gradient along the y axis', true, 274, 'middle'); },
    electricity: function () { return title('Distribution of Electricity', true) + download(530, 20); }
  };

  var cards = document.querySelectorAll('.card[data-chart]');
  for (var c = 0; c < cards.length; c++) {
    cards[c].innerHTML = '<svg class="chart" viewBox="0 0 549 412">' + charts[cards[c].getAttribute('data-chart')]() + '</svg>';
  }
})();
```
